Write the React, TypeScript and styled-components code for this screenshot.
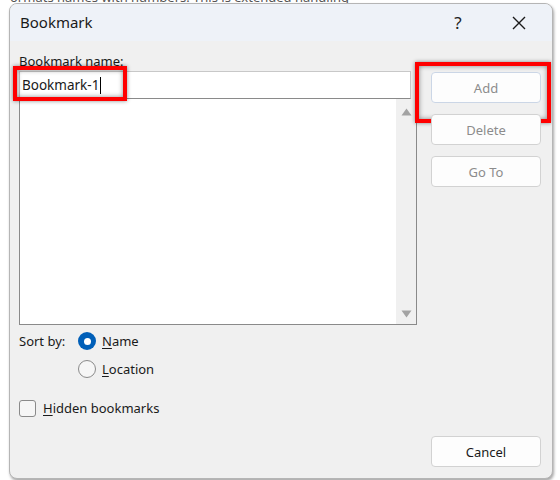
import React from "react";
import styled, { createGlobalStyle } from "styled-components";

const Global = createGlobalStyle`
  html, body { margin: 0; padding: 0; background: #ffffff; }
  body { width: 560px; height: 480px; overflow: hidden; font-family: "Noto Sans", "Open Sans", sans-serif; }
`;

const Desktop = styled.div`
  position: relative;
  width: 560px;
  height: 480px;
  overflow: hidden;
  background: #ffffff;
`;

const DocLine = styled.div`
  position: absolute;
  left: 10px;
  top: -12px;
  font-family: "Noto Sans", sans-serif;
  font-size: 13px;
  color: #555;
  white-space: nowrap;
`;

const Dialog = styled.div`
  position: absolute;
  left: 9px;
  top: 3px;
  width: 542px;
  height: 474px;
  border: 1px solid #b5b5b5;
  border-radius: 8px;
  background: #f0f0f0;
  box-shadow: 1px 2px 3px rgba(0, 0, 0, 0.35);
  display: flex;
  flex-direction: column;
  overflow: hidden;
  font-family: "Noto Sans", "Open Sans", sans-serif;
  color: #1a1a1a;
`;

const TitleBar = styled.div`
  height: 37px;
  background: #eef2f8;
  display: flex;
  align-items: center;
  padding-left: 10px;
  flex-shrink: 0;
`;

const Title = styled.div`
  font-size: 15px;
  flex: 1;
  color: #1a1a1a;
  padding-bottom: 2px;
`;

const TitleBtn = styled.div<{ $w: number }>`
  width: ${(p) => p.$w}px;
  display: flex;
  justify-content: center;
  align-items: center;
  font-size: 17px;
  color: #222;
`;

const Body = styled.div`
  flex: 1;
  display: flex;
  padding: 10px 11px 0 9px;
  gap: 14px;
`;

const LeftCol = styled.div`
  width: 398px;
  display: flex;
  flex-direction: column;
`;

const Label = styled.div`
  font-size: 13px;
  line-height: 18px;
  margin-bottom: 1px;
  padding-top: 1px;
`;

const U = styled.span`
  text-decoration: underline;
  text-underline-offset: 2px;
`;

const NameRow = styled.div`
  position: relative;
  width: 392px;
  height: 28px;
  background: #ffffff;
  border: 1px solid #c8c8c8;
  border-bottom-color: #8a8a8a;
  box-sizing: border-box;
  display: flex;
  align-items: center;
  padding-left: 2px;
  font-size: 13.5px;
`;

const Caret = styled.span`
  display: inline-block;
  width: 1px;
  height: 17px;
  background: #000;
  margin-left: 1px;
`;

const Highlight = styled.div`
  position: absolute;
  border: 4px solid #ff0000;
  box-shadow: 0 0 4px rgba(0, 0, 0, 0.45), inset 0 0 5px rgba(0, 0, 0, 0.45);
  pointer-events: none;
`;

const NameHighlight = styled(Highlight)`
  left: -7px;
  top: -6px;
  width: 106px;
  height: 27px;
`;

const ListBox = styled.div`
  width: 398px;
  height: 226px;
  background: #ffffff;
  border: 1px solid #8a8a8a;
  border-top: none;
  box-sizing: border-box;
  display: flex;
  justify-content: flex-end;
`;

const ScrollBar = styled.div`
  width: 20px;
  background: #f0f0f0;
  display: flex;
  flex-direction: column;
  justify-content: space-between;
  align-items: center;
  padding: 9px 0 6px;
`;

const Arrow = styled.svg`
  width: 11px;
  height: 8px;
  display: block;
`;

const SortRow = styled.div`
  display: flex;
  margin-top: 7px;
  font-size: 13px;
`;

const SortLabel = styled.div`
  width: 59px;
  line-height: 18px;
`;

const RadioGroup = styled.div`
  display: flex;
  flex-direction: column;
  gap: 10px;
`;

const Option = styled.div`
  display: flex;
  align-items: center;
  gap: 6px;
  height: 18px;
  font-size: 13px;
`;

const Radio = styled.div<{ $on?: boolean }>`
  width: 18px;
  height: 18px;
  border-radius: 50%;
  box-sizing: border-box;
  border: ${(p) => (p.$on ? "none" : "1px solid #8a8a8a")};
  background: ${(p) => (p.$on ? "#005fb8" : "#f6f6f6")};
  display: flex;
  align-items: center;
  justify-content: center;
  &::after {
    content: "";
    display: ${(p) => (p.$on ? "block" : "none")};
    width: 7px;
    height: 7px;
    border-radius: 50%;
    background: #ffffff;
  }
`;

const CheckRow = styled.div`
  display: flex;
  align-items: center;
  gap: 7px;
  margin-top: 21px;
  font-size: 13px;
`;

const Checkbox = styled.div`
  width: 17px;
  height: 17px;
  border: 1px solid #8a8a8a;
  border-radius: 3px;
  box-sizing: border-box;
  background: #f6f6f6;
`;

const RightCol = styled.div`
  width: 110px;
  display: flex;
  flex-direction: column;
  padding-top: 21px;
`;

const Button = styled.div<{ $disabled?: boolean; $blue?: boolean }>`
  position: relative;
  width: 110px;
  height: 31px;
  box-sizing: border-box;
  border: 1px solid ${(p) => (p.$blue ? "#cbd6e6" : "#d2d2d2")};
  border-radius: 4px;
  background: #fdfdfd;
  display: flex;
  align-items: center;
  justify-content: center;
  font-size: 13px;
  color: ${(p) => (p.$disabled ? "#8c8c8c" : "#1a1a1a")};
  margin-bottom: 11px;
`;

const AddHighlight = styled(Highlight)`
  left: -17px;
  top: -11px;
  width: 128px;
  height: 53px;
`;

const Spacer = styled.div`
  flex: 1;
`;

const BottomBtnWrap = styled.div`
  padding-bottom: 0px;
`;

export default function App() {
  return (
    <Desktop>
      <Global />
      <DocLine>ormats names with numbers. This is extended handling</DocLine>
      <Dialog>
        <TitleBar>
          <Title>Bookmark</Title>
          <TitleBtn $w={56}>?</TitleBtn>
          <TitleBtn $w={66}>
            <svg width="16" height="16" viewBox="0 0 16 16">
              <path d="M2 2 L14 14 M14 2 L2 14" stroke="#1a1a1a" strokeWidth="1.4" fill="none" />
            </svg>
          </TitleBtn>
        </TitleBar>
        <Body>
          <LeftCol>
            <Label>
              <U>B</U>ookmark name:
            </Label>
            <NameRow>
              Bookmark-1
              <Caret />
              <NameHighlight />
            </NameRow>
            <ListBox>
              <ScrollBar>
                <Arrow viewBox="0 0 11 8">
                  <path d="M0.5 7.5 L5.5 0.5 L10.5 7.5 Z" fill="#a3a3a3" />
                </Arrow>
                <Arrow viewBox="0 0 11 8">
                  <path d="M0.5 0.5 L5.5 7.5 L10.5 0.5 Z" fill="#a3a3a3" />
                </Arrow>
              </ScrollBar>
            </ListBox>
            <SortRow>
              <SortLabel>Sort by:</SortLabel>
              <RadioGroup>
                <Option>
                  <Radio $on />
                  <span>
                    <U>N</U>ame
                  </span>
                </Option>
                <Option>
                  <Radio />
                  <span>
                    <U>L</U>ocation
                  </span>
                </Option>
              </RadioGroup>
            </SortRow>
            <CheckRow>
              <Checkbox />
              <span>
                <U>H</U>idden bookmarks
              </span>
            </CheckRow>
          </LeftCol>
          <RightCol>
            <Button $disabled $blue>
              Add
              <AddHighlight />
            </Button>
            <Button $disabled>Delete</Button>
            <Button $disabled>Go To</Button>
            <Spacer />
            <BottomBtnWrap>
              <Button>Cancel</Button>
            </BottomBtnWrap>
          </RightCol>
        </Body>
      </Dialog>
    </Desktop>
  );
}
